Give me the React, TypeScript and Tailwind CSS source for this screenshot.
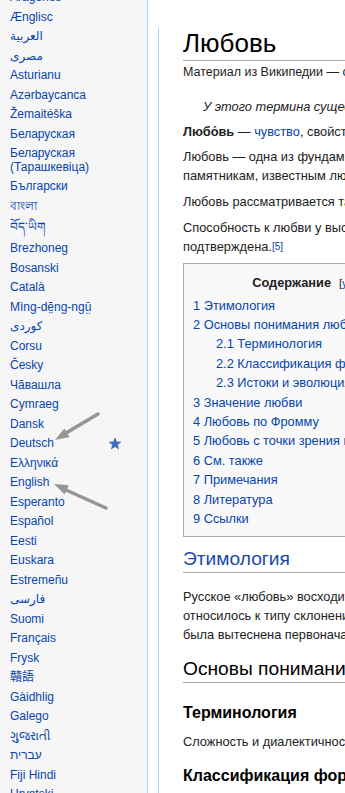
import React from 'react';

type Lang = { label: React.ReactNode; h?: string };

const langs: Lang[] = [
  { label: 'Aragonés' },
  { label: 'Ænglisc' },
  { label: 'العربية' },
  { label: 'مصرى' },
  { label: 'Asturianu' },
  { label: 'Azərbaycanca' },
  { label: 'Žemaitėška' },
  { label: 'Беларуская' },
  { label: <>Беларуская<br />(Тарашкевіца)</>, h: 'tall' },
  { label: 'Български' },
  { label: 'বাংলা' },
  { label: 'བོད་ཡིག', h: 'tib' },
  { label: 'Brezhoneg' },
  { label: 'Bosanski' },
  { label: 'Català' },
  { label: 'Mìng-dĕ̤ng-ngṳ̄' },
  { label: 'کوردی' },
  { label: 'Corsu' },
  { label: 'Česky' },
  { label: 'Чăвашла' },
  { label: 'Cymraeg' },
  { label: 'Dansk' },
  { label: 'Deutsch', h: 'star' },
  { label: 'Ελληνικά' },
  { label: 'English' },
  { label: 'Esperanto' },
  { label: 'Español' },
  { label: 'Eesti' },
  { label: 'Euskara' },
  { label: 'Estremeñu' },
  { label: 'فارسی' },
  { label: 'Suomi' },
  { label: 'Français' },
  { label: 'Frysk' },
  { label: '贛語' },
  { label: 'Gàidhlig' },
  { label: 'Galego' },
  { label: 'ગુજરાતી' },
  { label: 'עברית' },
  { label: 'Fiji Hindi' },
  { label: 'Hrvatski' },
];

const toc = [
  { n: '1', t: 'Этимология' },
  { n: '2', t: 'Основы понимания любви' },
  { n: '2.1', t: 'Терминология', sub: true },
  { n: '2.2', t: 'Классификация форм любви', sub: true },
  { n: '2.3', t: 'Истоки и эволюция понятия', sub: true },
  { n: '3', t: 'Значение любви' },
  { n: '4', t: 'Любовь по Фромму' },
  { n: '5', t: 'Любовь с точки зрения нейрофизиологии' },
  { n: '6', t: 'См. также' },
  { n: '7', t: 'Примечания' },
  { n: '8', t: 'Литература' },
  { n: '9', t: 'Ссылки' },
];

function Star() {
  return (
    <svg className="absolute left-[99px] top-[4px]" width="12" height="12" viewBox="109 437 12 12">
      <polygon
        points="115,437 116.47,440.98 120.71,441.15 117.38,443.77 118.53,447.85 115,445.5 111.47,447.85 112.62,443.77 109.29,441.15 113.53,440.98"
        fill="#3a6fc4" stroke="#2a55a0" strokeWidth="0.6" />
    </svg>
  );
}

function Arrows() {
  return (
    <svg className="absolute left-0 top-0 pointer-events-none" width="345" height="793">
      <line x1="98" y1="414" x2="66" y2="433" stroke="#959595" strokeWidth="3.5" strokeLinecap="round" />
      <polygon points="55,440 69.6,437 64.4,428.5" fill="#959595" />
      <line x1="106" y1="508" x2="66" y2="490" stroke="#959595" strokeWidth="3.5" strokeLinecap="round" />
      <polygon points="54,484 68.8,485.3 64.6,494.4" fill="#959595" />
    </svg>
  );
}

export default function App() {
  return (
    <div className="relative w-[345px] h-[793px] overflow-hidden flex bg-white text-[#222] font-['Liberation_Sans','DejaVu_Sans','Noto_Sans_CJK_SC',sans-serif]">
      {/* sidebar: interlanguage links */}
      <div className="w-[147px] shrink-0 bg-[#f6f6f6]">
        <ul className="-mt-[12px] pl-[10px] text-[12px] text-[#0645ad]">
          {langs.map((l, i) => {
            if (l.h === 'tall')
              return <li key={i} className="h-[33px] pt-[3px] leading-[13.5px]">{l.label}</li>;
            if (l.h === 'tib')
              return <li key={i} className="h-[23px] leading-[23px] whitespace-nowrap">{l.label}</li>;
            return (
              <li key={i} className="relative h-[19.5px] leading-[19.5px] whitespace-nowrap">
                {l.label}
                {l.h === 'star' && <Star />}
              </li>
            );
          })}
        </ul>
      </div>

      {/* content */}
      <div className="border-l border-[#a7d7f9] pl-[10px] shrink-0">
        <div className="border-l border-[#a7d7f9] h-full pl-[24px] w-[600px] text-[12.8px] leading-[19.2px] whitespace-nowrap">
          <h1 className="mt-[28px] text-[26px] leading-[30px] pb-[2px] border-b border-[#aaa] text-black">Любовь</h1>
          <div className="mt-[3px] text-[12.5px] leading-[16px]">Материал из Википедии — свободной энциклопедии</div>

          <div className="mt-[17.4px] pl-[20px] italic">У этого термина существуют и другие значения, см. Любовь (значения).</div>

          <p className="mt-[5px]">
            <b>Любо́вь</b> — <span className="text-[#0645ad]">чувство</span>, свойственное человеку, глубокая привязанность и устремлённость к другому человеку
          </p>
          <p className="mt-[6.4px]">
            Любовь — одна из фундаментальных и общих тем в мировой культуре и искусстве. Рассуждения о любви
            <br />памятникам, известным людям.
          </p>
          <p className="mt-[6.4px]">Любовь рассматривается также как философская категория, в виде субъектного отношения</p>
          <p className="mt-[6.4px]">
            Способность к любви у высших животных (в том числе у человека) экспериментально
            <br />подтверждена.<sup className="text-[10px] text-[#0645ad] relative -top-[1px]">[5]</sup>
          </p>

          {/* table of contents */}
          <div className="mt-[7.4px] w-[266px] border border-[#aaa] bg-[#f9f9f9] pt-[9px] pb-[8px] px-[9px]">
            <div className="text-center">
              <b>Содержание</b>
              <span className="ml-[8px] text-[11px]">[<span className="text-[#0645ad]">убрать</span>]</span>
            </div>
            <ul className="mt-[2px] text-[#0645ad]">
              {toc.map((item) => (
                <li key={item.n} className={`leading-[19.4px] ${item.sub ? 'pl-[23px]' : ''}`}>
                  {item.n} {item.t}
                </li>
              ))}
            </ul>
          </div>

          <h2 className="mt-[10px] text-[19.2px] leading-[24px] pb-[1px] border-b border-[#aaa] text-[#1c4aa8]">Этимология</h2>
          <p className="mt-[13.4px]">
            Русское «любовь» восходит к праслав. *ljuby, *ljubъve, которое изначально
            <br />относилось к типу склонения на *-ū, *-ъve, впоследствии эта форма
            <br />была вытеснена первоначально винительным падежом
          </p>

          <h2 className="mt-[13px] text-[19.2px] leading-[24px] pb-[1px] border-b border-[#aaa] text-black">Основы понимания любви</h2>
          <h3 className="mt-[20px] text-[16px] leading-[20px] font-bold text-black">Терминология</h3>
          <p className="mt-[8.4px]">Сложность и диалектичность любви породили множество трактовок</p>
          <h3 className="mt-[15.4px] text-[16px] leading-[20px] font-bold text-black">Классификация форм любви</h3>
        </div>
      </div>

      <Arrows />
    </div>
  );
}
